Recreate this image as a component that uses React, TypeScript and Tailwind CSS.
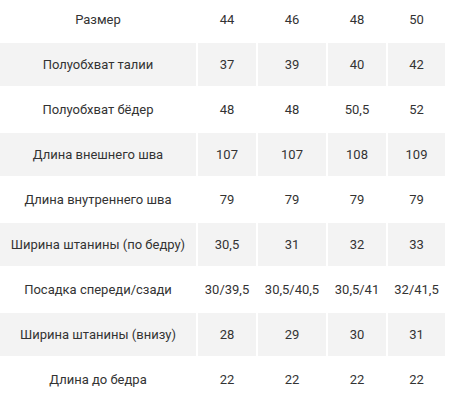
const rows: string[][] = [
  ["Размер", "44", "46", "48", "50"],
  ["Полуобхват талии", "37", "39", "40", "42"],
  ["Полуобхват бёдер", "48", "48", "50,5", "52"],
  ["Длина внешнего шва", "107", "107", "108", "109"],
  ["Длина внутреннего шва", "79", "79", "79", "79"],
  ["Ширина штанины (по бедру)", "30,5", "31", "32", "33"],
  ["Посадка спереди/сзади", "30/39,5", "30,5/40,5", "30,5/41", "32/41,5"],
  ["Ширина штанины (внизу)", "28", "29", "30", "31"],
  ["Длина до бедра", "22", "22", "22", "22"],
]

const widths = ["w-[196px]", "w-[58px]", "w-[68px]", "w-[58px]", "w-[57px]"]

export default function App() {
  return (
    <div className="w-[458px] h-[407px] overflow-hidden bg-white">
      <table
        className="-mt-[4px] -ml-[2px] border-separate border-spacing-[2px] table-fixed text-[13px] text-[#333333]"
        style={{ fontFamily: "Roboto, 'Noto Sans', sans-serif" }}
      >
        <tbody>
          {rows.map((row, i) => (
            <tr key={i} className={i % 2 === 1 ? "bg-[#f3f3f3]" : "bg-white"}>
              {row.map((cell, j) => (
                <td
                  key={j}
                  className={`${widths[j]} h-[43px] p-0 text-center align-middle whitespace-nowrap`}
                >
                  {cell}
                </td>
              ))}
            </tr>
          ))}
        </tbody>
      </table>
    </div>
  )
}
